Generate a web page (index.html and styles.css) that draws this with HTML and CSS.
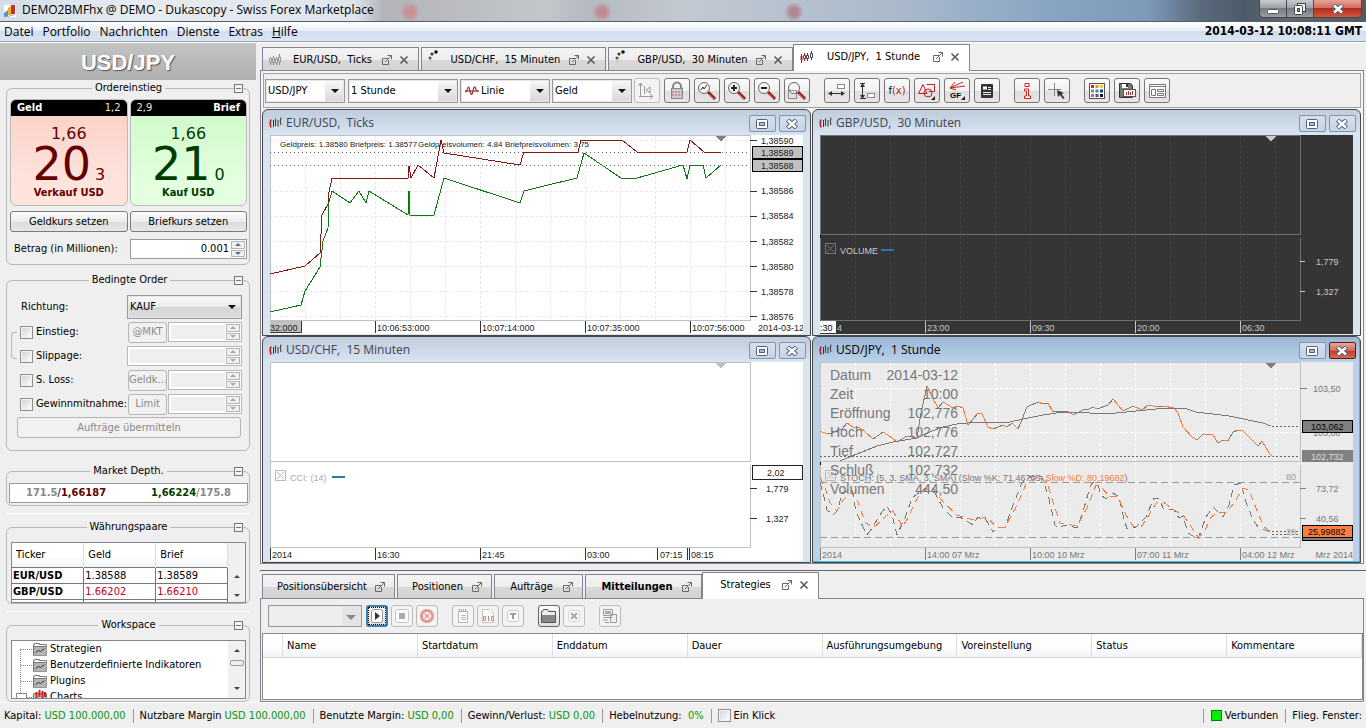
FILE: index.html
```html
<!DOCTYPE html>
<html lang="de">
<head>
<meta charset="utf-8">
<title>DEMO2BMFhx @ DEMO - Dukascopy - Swiss Forex Marketplace</title>
<link rel="stylesheet" href="styles.css">
</head>
<body>
<svg class="defs" aria-hidden="true">
  <symbol id="pop" viewBox="0 0 10 10"><path d="M6 3.500H.5v6h6V5M3 7l4-4M5.500.5h4v4M9.500.5L6.500 3.500" fill="none" stroke="#6a6a6a"/></symbol>
  <symbol id="close" viewBox="0 0 10 10"><path d="M1.500 1.500l7 7M8.500 1.500l-7 7" stroke="#555" stroke-width="1.500"/></symbol>
  <symbol id="candle" viewBox="0 0 14 14"><path d="M2 3.500Q.5 7 2 11.500" fill="none" stroke="#c01820" stroke-width="1.600"/><path d="M4.500 4v7" stroke="#701820"/><path d="M6.500 2.500v7.500M9 4v6.500M12 1.500q-1.500 4 0 7.500" fill="none" stroke="#444" stroke-width="1.100"/></symbol>
  <symbol id="candleg" viewBox="0 0 14 14"><path d="M1.500 4v8M4.500 3v9M7.500 4v8M10.500 1v11" stroke="#888"/><path d="M.5 5.500h2v4h-2zM3.500 5.500h2v4h-2zM6.500 6h2v4h-2zM9.500 4h2v5h-2z" fill="#ddd" stroke="#999"/></symbol>
  <symbol id="candler" viewBox="0 0 14 14"><path d="M1.500 4v9M4.500 3v8" stroke="#b02028"/><path d="M7.500 3v8M11.500 1v9" stroke="#444"/><path d="M.5 6h2v4h-2z" fill="#b02028"/><path d="M3.500 5.500h2v3h-2z" fill="#fff" stroke="#b02028"/><path d="M6.500 5.500h2v3h-2zM10.500 3.500h2v4h-2z" fill="#fff" stroke="#444"/></symbol>
  <symbol id="dots" viewBox="0 0 14 14"><circle cx="2" cy="8" r="1.500" fill="#555"/><circle cx="4" cy="4" r="1.500" fill="#333"/><circle cx="8" cy="2" r="1.800" fill="#111"/><circle cx="3" cy="11" r="1.500" fill="#ccc"/></symbol>
  <symbol id="redx" viewBox="0 0 14 10"><path d="M0 5h14" stroke="#333"/><path d="M0 6l2-1Q3.500-3 5 5q1.500 7 3 0Q9.500-3 11 4l2 1.500" fill="none" stroke="#b82a2a" stroke-width="1.200"/></symbol>
  <symbol id="max" viewBox="0 0 12 10"><rect x=".5" y=".5" width="11" height="9" rx="1" fill="#fff" stroke="#53617d"/><rect x="3.500" y="3.500" width="5" height="3" fill="#aabbd2" stroke="#53617d"/></symbol>
  <symbol id="wx" viewBox="0 0 12 10"><path d="M1.500 1l9 8M10.500 1l-9 8" stroke="#53617d" stroke-width="4.500"/><path d="M2 1.500l8 7M10 1.500l-8 7" stroke="#fff" stroke-width="2.400"/></symbol>
  <symbol id="lens" viewBox="0 0 20 20"><path d="M11 11l7 7" stroke="#9b1c1c" stroke-width="3"/><path d="M12 13l5 5" stroke="#e66" stroke-width="1"/><circle cx="7" cy="7" r="5.500" fill="#f4f4f4" stroke="#666"/></symbol>
  <symbol id="folder" viewBox="0 0 14 14"><path d="M.5 13.500V2.500h1v-1h5v1h7v11z" fill="#fff" stroke="#777"/><path d="M1 4.500h12.500v9H1z" fill="#b5b5b5"/><path d="M1 4.500h12" stroke="#777"/><path d="M2.500 10.500l3-2 2 1 4-3" fill="none" stroke="#333"/></symbol>
</svg>

<header class="titlebar">
  <svg class="logo" width="12" height="12" viewBox="0 0 12 12"><rect width="12" height="12" fill="#fff"/><path d="M0 8l4-3v7H0z" fill="#5a8fd0"/><path d="M4 3l3-2v9H4z" fill="#e5b62c"/><path d="M7 0h4v9H7z" fill="#cf2d2a"/><path d="M1 12l8-3 2 1-7 2z" fill="#b9b9b9"/></svg>
  <h1>DEMO2BMFhx @ DEMO - Dukascopy - Swiss Forex Marketplace</h1>
  <div class="winbtns">
    <button aria-label="Minimieren"><svg width="12" height="12"><rect x=".5" y="6.500" width="11" height="4" rx="1" fill="#fff" stroke="#555"/></svg></button>
    <button aria-label="Wiederherstellen"><svg width="12" height="12"><rect x="3.500" y=".5" width="8" height="8" fill="#eee" stroke="#444"/><rect x=".5" y="2.500" width="8" height="9" rx="1" fill="#fff" stroke="#444"/><rect x="3.500" y="5.500" width="2" height="3" fill="#999" stroke="#444"/></svg></button>
    <button class="x" aria-label="Schließen"><svg width="12" height="10"><use href="#wx"/></svg></button>
  </div>
</header>
<nav class="menubar">
  <button>Datei</button><button>Portfolio</button><button>Nachrichten</button><button>Dienste</button><button>Extras</button><button><u>H</u>ilfe</button>
  <time>2014-03-12 10:08:11 GMT</time>
</nav>

<div class="main">
<aside class="side">
  <h2 class="pair">USD/JPY</h2>

  <fieldset class="entry">
    <legend>Ordereinstieg</legend><button class="fold" aria-label="Einklappen"></button>
    <div class="cards">
      <button class="card sell"><span class="top"><b>Geld</b><i>1,2</i></span><span class="fig">1,66</span><span class="pips"><span>20</span><small>3</small></span><b class="act">Verkauf USD</b></button>
      <button class="card buy"><span class="top"><i>2,9</i><b>Brief</b></span><span class="fig">1,66</span><span class="pips"><span>21</span><small>0</small></span><b class="act">Kauf USD</b></button>
      <button class="btn">Geldkurs setzen</button>
      <button class="btn">Briefkurs setzen</button>
      <label for="amount">Betrag (in Millionen):</label>
      <span class="spin on"><input id="amount" value="0.001"><span class="arr"><button class="up" aria-label="Mehr"></button><button class="dn" aria-label="Weniger"></button></span></span>
    </div>
  </fieldset>

  <fieldset class="cond">
    <legend>Bedingte Order</legend><button class="fold" aria-label="Einklappen"></button>
    <div class="crow dir"><label for="dir">Richtung:</label><span class="combo full"><select id="dir"><option>KAUF</option></select></span></div>
    <div class="crow link"><label><input type="checkbox">Einstieg:</label><button class="btn off">@MKT</button><span class="spin"><input disabled aria-label="Einstieg"><span class="arr"><button class="up" disabled aria-label="Mehr"></button><button class="dn" disabled aria-label="Weniger"></button></span></span></div>
    <div class="crow wide"><label><input type="checkbox">Slippage:</label><span class="spin"><input disabled aria-label="Slippage"><span class="arr"><button class="up" disabled aria-label="Mehr"></button><button class="dn" disabled aria-label="Weniger"></button></span></span></div>
    <div class="crow"><label><input type="checkbox">S. Loss:</label><button class="btn off">Geldk…</button><span class="spin"><input disabled aria-label="S. Loss"><span class="arr"><button class="up" disabled aria-label="Mehr"></button><button class="dn" disabled aria-label="Weniger"></button></span></span></div>
    <div class="crow"><label><input type="checkbox">Gewinnmitnahme:</label><button class="btn off">Limit</button><span class="spin"><input disabled aria-label="Gewinnmitnahme"><span class="arr"><button class="up" disabled aria-label="Mehr"></button><button class="dn" disabled aria-label="Weniger"></button></span></span></div>
    <button class="btn off submit">Aufträge übermitteln</button>
  </fieldset>
  <fieldset class="md">
    <legend>Market Depth.</legend><button class="fold" aria-label="Einklappen"></button>
    <div class="depth"><span>171.5<em>/</em><strong class="r">1,66187</strong></span><span><strong class="g">1,66224</strong>/175.8</span></div>
  </fieldset>
  <hr>
  <fieldset class="box">
    <legend>Währungspaare</legend><button class="fold" aria-label="Einklappen"></button>
    <div class="pane pairs">
      <table><thead><tr><th>Ticker</th><th>Geld</th><th>Brief</th></tr></thead>
      <tbody><tr><td>EUR/USD</td><td>1.38588</td><td>1.38589</td></tr><tr class="red"><td>GBP/USD</td><td>1.66202</td><td>1.66210</td></tr><tr><td></td><td></td><td></td></tr></tbody></table>
      <div class="sb"><i class="su"></i><i class="sd"></i></div>
    </div>
  </fieldset>
  <hr>
  <fieldset class="box">
    <legend>Workspace</legend><button class="fold" aria-label="Einklappen"></button>
    <div class="pane tree">
      <ul>
        <li><svg width="14" height="14"><use href="#folder"/></svg>Strategien</li>
        <li><svg width="14" height="14"><use href="#folder"/></svg>Benutzerdefinierte Indikatoren</li>
        <li><svg width="14" height="14"><use href="#folder"/></svg>Plugins</li>
        <li class="charts"><svg width="14" height="14" viewBox="0 0 14 14"><path d="M.5 3.500h13v10H.5z" fill="#ccc" stroke="#777"/><path d="M3.500 2v7M6.500 0v7M9.500 1v7M12 2v5" stroke="#c22" stroke-width="2"/></svg>Charts</li>
      </ul>
      <div class="sb"><i class="su"></i><i class="thumb"></i><i class="sd"></i></div>
    </div>
  </fieldset>
</aside>

<main class="work">
  <div class="tabs">
    <div class="tab t157"><svg width="14" height="14"><use href="#candleg"/></svg><button class="name">EUR/USD,&nbsp; Ticks</button><button aria-label="Abdocken"><svg width="10" height="10"><use href="#pop"/></svg></button><button aria-label="Schließen"><svg width="10" height="10"><use href="#close"/></svg></button></div>
    <div class="tab t187"><svg class="up2" width="14" height="14"><use href="#dots"/></svg><button class="name">USD/CHF,&nbsp; 15 Minuten</button><button aria-label="Abdocken"><svg width="10" height="10"><use href="#pop"/></svg></button><button aria-label="Schließen"><svg width="10" height="10"><use href="#close"/></svg></button></div>
    <div class="tab t187"><svg class="up2" width="14" height="14"><use href="#dots"/></svg><button class="name">GBP/USD,&nbsp; 30 Minuten</button><button aria-label="Abdocken"><svg width="10" height="10"><use href="#pop"/></svg></button><button aria-label="Schließen"><svg width="10" height="10"><use href="#close"/></svg></button></div>
    <div class="tab t177 act"><svg width="14" height="14"><use href="#candler"/></svg><button class="name">USD/JPY,&nbsp; 1 Stunde</button><button aria-label="Abdocken"><svg width="10" height="10"><use href="#pop"/></svg></button><button aria-label="Schließen"><svg width="10" height="10"><use href="#close"/></svg></button></div>
  </div>

  <div class="frame">
    <div class="toolbar">
      <span class="combo w80"><select aria-label="Instrument"><option>USD/JPY</option></select></span>
      <span class="combo w110"><select aria-label="Periode"><option>1 Stunde</option></select></span>
      <span class="combo w90"><svg width="14" height="10"><use href="#redx"/></svg><select aria-label="Darstellung"><option>Linie</option></select></span>
      <span class="combo w80 last"><select aria-label="Seite"><option>Geld</option></select></span>
      <button class="tb off" aria-label="Verschieben"><svg width="20" height="20"><path d="M3.500 3v12M1.500 5l2-3 2 3M2 15.500h14M13 13l3 2.500-3 2.500M7.500 5v8M13 6v6l-4-3z" fill="none" stroke="#999"/></svg></button>
      <button class="tb" aria-label="Sperren"><svg width="20" height="20"><path d="M6 8V5.500a4 4 0 0 1 8 0V8" fill="none" stroke="#888" stroke-width="2"/><rect x="4.500" y="7.500" width="11" height="10" fill="#ccc" stroke="#888"/><path d="M5 11h10M5 14h10" stroke="#c66" stroke-dasharray="2 1"/></svg></button>
      <button class="tb" aria-label="Zoom anpassen"><svg width="20" height="20"><use href="#lens"/><path d="M4 9l2-3 1 2 3-4" fill="none" stroke="#333"/></svg></button>
      <button class="tb" aria-label="Vergrößern"><svg width="20" height="20"><use href="#lens"/><path d="M4 7h6M7 4v6" stroke="#222" stroke-width="2"/></svg></button>
      <button class="tb" aria-label="Verkleinern"><svg width="20" height="20"><use href="#lens"/><path d="M4 7h6" stroke="#222" stroke-width="2"/></svg></button>
      <button class="tb gap" aria-label="Bereich zoomen"><svg width="20" height="20"><use href="#lens"/><path d="M1.500 9.500h8v8h-8z" fill="none" stroke="#333" stroke-dasharray="1 1"/></svg></button>
      <button class="tb" aria-label="Horizontal"><svg width="20" height="20"><rect x="10.500" y="3.500" width="7" height="4" fill="#fff" stroke="#888"/><path d="M2 12.500h14" stroke="#333"/><path d="M5 10l-4 2.500 4 2.500zM14 10l4 2.500-4 2.500z" fill="#333"/></svg></button>
      <button class="tb" aria-label="Vertikal"><svg width="20" height="20"><rect x="10.500" y="12.500" width="7" height="4" fill="#fff" stroke="#888"/><path d="M5.500 3v14M3 17.500h6M3 2.500h5" stroke="#333"/><path d="M3 6l2.500-4L8 6zM3 14l2.500 4L8 14z" fill="#333"/></svg></button>
      <button class="tb fx"><span>f<em>(x)</em></span></button>
      <button class="tb" aria-label="Formen"><svg width="20" height="20"><path d="M1.500 12.500l4.500-9 4 9zM9.500 3.500h8v7h-6" fill="none" stroke="#b22"/><circle cx="11" cy="12" r="4" fill="none" stroke="#b22"/><path d="M18 15v4h-4z" fill="#222"/></svg></button>
      <button class="tb gf" aria-label="GF"><svg width="20" height="20"><path d="M3 7l15-2M3 7l13-6M3 7L8 1M3 7l6 2" stroke="#c22" fill="none"/><path d="M18 15v4h-4z" fill="#222"/></svg><span>GF</span></button>
      <button class="tb gap" aria-label="Notiz"><svg width="20" height="20"><rect x="4" y="3" width="12" height="14" rx="1" fill="#333"/><path d="M6 5.500h4v3H6z" fill="#fff"/><path d="M11 6.500h3M11 8.500h3M6 11.500h8M6 13.500h8" stroke="#eee"/></svg></button>
      <button class="tb" aria-label="Info"><svg width="20" height="20"><path d="M8 2.500h4v3H8zM7.500 8h4v7h2v2.500h-6V15h2v-5h-2z" fill="#fff" stroke="#c22"/></svg></button>
      <button class="tb gap" aria-label="Fadenkreuz"><svg width="20" height="20"><path d="M7.500 2v13M1 8.500h13" stroke="#888"/><path d="M10 9l7 3-2.500 1 3 4-1.500 1-3-4-2 2z" fill="#333"/></svg></button>
      <button class="tb" aria-label="Farben"><svg width="20" height="20"><rect x="2.500" y="2.500" width="15" height="15" fill="#fff" stroke="#555"/><path d="M4 4h3v3H4z" fill="#d22"/><path d="M8.500 4h3v3h-3z" fill="#e82"/><path d="M13 4h3v3h-3z" fill="#fc3"/><path d="M4 8.500h3v3H4z" fill="#6a2"/><path d="M8.500 8.500h3v3h-3z" fill="#28c"/><path d="M13 8.500h3v3h-3z" fill="#148"/><path d="M4 13h3v3H4z" fill="#b5d"/><path d="M8.500 13h3v3h-3z" fill="#555"/><path d="M13 13h3v3h-3z" fill="#111"/></svg></button>
      <button class="tb" aria-label="Speichern"><svg width="20" height="20"><path d="M2.500 2.500h11l2 2v12h-13z" fill="#777" stroke="#333"/><path d="M5 3h6v4H5z" fill="#fff"/><path d="M9 3h2v3H9z" fill="#333"/><rect x="6.500" y="8.500" width="12" height="7" fill="#fff" stroke="#555"/><path d="M9.500 11v3M11.500 10v4M13.500 11v3M15.500 10v4" stroke="#b33"/></svg></button>
      <button class="tb" aria-label="Vorlage"><svg width="20" height="20"><path d="M2.500 3.500h16v13h-16zM3 5.500h15M4.500 8.500h4v6h-4zM10.500 8.500h6v2h-6zM10.500 12.500h6v2h-6z" fill="#fff" stroke="#777"/></svg></button>
    </div>

    <div class="mdi">
      <section class="win">
        <div class="wt"><svg width="14" height="14"><use href="#candle"/></svg><h3>EUR/USD,&nbsp; Ticks</h3><button aria-label="Maximieren"><svg width="12" height="10"><use href="#max"/></svg></button><button aria-label="Schließen"><svg width="12" height="10"><use href="#wx"/></svg></button></div>
        <svg class="chart light">
          <path class="grid" d="M35.500 1V185M70.500 1V185M105.500 1V185M140.500 1V185M175.500 1V185M210.500 1V185M245.500 1V185M280.500 1V185M315.500 1V185M350.500 1V185M385.500 1V185M420.500 1V185M455.500 1V185M0 5.500H480M0 56.500H480M0 81.500H480M0 106.500H480M0 131.500H480M0 156.500H480M0 181.500H480"/>
          <path class="frm" d="M.5 185.500V.5H480.500V185.500H0"/>
          <path class="dot" d="M0 17.500H480M0 30.500H480"/>
          <g class="info"><text x="10" y="12">Geldpreis: 1.38580</text><text x="80" y="12">Briefpreis: 1.38577</text><text x="148" y="12">Geldpreisvolumen: 4.84</text><text x="235" y="12">Briefpreisvolumen: 3.75</text></g>
          <polyline class="ln" stroke="#8b1414" points="0,139 35,131 50,118 52,80 58,69 59,57 62,43 138,43 139,31 141,43 148,30 164,43 171,5 174,18 250,30 254,17 308,17 311,5 352,5 367,17 417,17 420,5 434,17 451,17"/>
          <polyline class="ln" stroke="#0f7a14" points="0,177 31,170 35,156 50,132 53,106 58,93 59,67 62,56 80,68 89,56 96,68 99,56 138,80 139,56 140,80 164,80 174,43 250,68 254,56 270,52 307,43 314,18 351,43 367,43 413,30 417,44 420,30 433,30 436,43 451,30"/>
          <path d="M445 1h12l-6 5z" fill="#808080"/>
          <path class="tick" d="M480 5.500h7M480 56.500h7M480 81.500h7M480 106.500h7M480 131.500h7M480 156.500h7M480 181.500h7M105.500 186v12M210.500 186v12M315.500 186v12M420.500 186v12"/>
          <rect x="482.500" y="11.500" width="50" height="12" class="tag"/><rect x="482.500" y="24.500" width="50" height="12" class="tag"/>
          <rect x="0" y="186" width="31" height="12" fill="#c0c0c0"/><path d="M31.500 186v11.500H0" class="tick"/>
          <g><text x="491" y="9">1,38590</text><text x="491" y="21">1,38589</text><text x="491" y="34">1,38588</text><text x="491" y="59">1,38586</text><text x="491" y="84">1,38584</text><text x="491" y="110">1,38582</text><text x="491" y="135">1,38580</text><text x="491" y="160">1,38578</text><text x="491" y="185">1,38576</text>
          <text x="0" y="196">32:000</text><text x="107" y="196">10:06:53:000</text><text x="212" y="196">10:07:14:000</text><text x="317" y="196">10:07:35:000</text><text x="422" y="196">10:07:56:000</text><text x="488" y="196">2014-03-12</text></g>
        </svg>
      </section>

      <section class="win">
        <div class="wt"><svg width="14" height="14"><use href="#candle"/></svg><h3>GBP/USD,&nbsp; 30 Minuten</h3><button aria-label="Maximieren"><svg width="12" height="10"><use href="#max"/></svg></button><button aria-label="Schließen"><svg width="12" height="10"><use href="#wx"/></svg></button></div>
        <svg class="chart dark">
          <path class="grid" d="M35.500 1V185M70.500 1V185M105.500 1V185M140.500 1V185M175.500 1V185M210.500 1V185M245.500 1V185M280.500 1V185M315.500 1V185M350.500 1V185M385.500 1V185M420.500 1V185M455.500 1V185"/>
          <path class="frm" d="M.5 185.500V.5H480.500V99.500H0M480.500 103V185.500H0"/>
          <path d="M0 100v3" stroke="#000" stroke-width="2"/>
          <path d="M445 1h12l-6 5z" fill="#c8c8c8"/>
          <path d="M5.500 108.500h10v10h-10zM7 110l7 7M14 110l-7 7" fill="none" stroke="#777"/>
          <text x="20" y="119">VOLUME</text><path d="M61 115h13" stroke="#2a78b0" stroke-width="2"/>
          <path class="tick" d="M480 126.500h5M480 156.500h5M105.500 186v12M210.500 186v12M315.500 186v12M420.500 186v12"/>
          <text x="496" y="130">1,779</text><text x="496" y="160">1,327</text>
          <rect x="0" y="186" width="16" height="12" fill="#fff"/><text x="0" y="196" class="blk">:30</text><text x="17" y="196">4</text>
          <text x="107" y="196">23:00</text><text x="212" y="196">09:30</text><text x="317" y="196">20:00</text><text x="422" y="196">06:30</text>
        </svg>
      </section>

      <section class="win">
        <div class="wt"><svg width="14" height="14"><use href="#candle"/></svg><h3>USD/CHF,&nbsp; 15 Minuten</h3><button aria-label="Maximieren"><svg width="12" height="10"><use href="#max"/></svg></button><button aria-label="Schließen"><svg width="12" height="10"><use href="#wx"/></svg></button></div>
        <svg class="chart light">
          <path class="frm" d="M.5 185.500V.5H480.500V99.500H0M480.500 103V185.500H0"/>
          <path d="M445 1h12l-6 5z" fill="#c0c0c0"/>
          <path d="M5.500 108.500h10v10h-10zM7 110l7 7M14 110l-7 7" fill="none" stroke="#bbb"/>
          <text x="20" y="119" class="pale">CCI: (14)</text><path d="M62 115h13" stroke="#2a78b0" stroke-width="2"/>
          <path class="tick" d="M480 126.500h7M480 156.500h7M105.500 186v12M210.500 186v12M315.500 186v12M387.500 186v12M417.500 186v12M419.500 186v12M.5 186v12"/>
          <rect x="482.500" y="103.500" width="50" height="14" fill="#fff" stroke="#222"/>
          <text x="497" y="114">2,02</text><text x="496" y="130">1,779</text><text x="496" y="160">1,327</text>
          <text x="2" y="196">2014</text><text x="107" y="196">16:30</text><text x="212" y="196">21:45</text><text x="317" y="196">03:00</text><text x="390" y="196">07:15</text><text x="421" y="196">08:15</text>
        </svg>
      </section>

      <section class="win active">
        <div class="wt"><svg width="14" height="14"><use href="#candle"/></svg><h3>USD/JPY,&nbsp; 1 Stunde</h3><button aria-label="Maximieren"><svg width="12" height="10"><use href="#max"/></svg></button><button class="x" aria-label="Schließen"><svg width="12" height="10"><use href="#wx"/></svg></button></div>
        <svg class="chart gray">
          <path class="grid" d="M35.500 1V185M70.500 1V185M105.500 1V185M140.500 1V185M175.500 1V185M210.500 1V185M245.500 1V185M280.500 1V185M315.500 1V185M350.500 1V185M385.500 1V185M420.500 1V185M455.500 1V185M0 26.500H480M0 70.500H480"/>
          <path class="frm" d="M.5 185.500V.5H480.500V99.500H0M480.500 103V185.500H0"/>
          <path d="M0 100v3" stroke="#000" stroke-width="2"/>
          <path d="M0 94.500H480M452 64.500H480M452 169.500H480M452 172.500H480" stroke="#666" stroke-dasharray="2 2"/>
          <path d="M0 120.500H480M0 175.500H480" stroke="#999" stroke-dasharray="7 4"/>
          <path d="M5.500 108.500h10v10h-10zM7 110l7 7M14 110l-7 7" fill="none" stroke="#bbb"/>
          <polyline class="ln" stroke="#ff7a3a" points="0,69 7,72 12,71 18,68 22,67 27,61 33,65 40,66 45,70 53,77 63,70 68,73 77,80 87,74 97,76 101,51 107,24 112,35 118,46 123,40 133,46 138,44 143,46 148,63 158,51 162,52 168,65 173,67 183,63 187,65 192,61 198,67 207,45 218,40 223,42 228,41 233,50 248,49 253,53 263,48 269,47 273,45 277,47 288,43 293,37 303,49 313,44 322,48 328,43 338,45 343,44 354,46 358,51 363,65 372,75 377,78 383,72 393,73 398,81 403,78 408,79 413,70 418,68 423,69 438,84 442,79 449,91 453,95"/>
          <path class="ln" stroke="#7d7d7d" d="M7 72L12 71 18 68 22 67 27 61M53 77L63 70M77 80L87 74M97 76L101 51 107 24M118 46L123 40M133 46L138 44M148 63L158 51M173 67L183 63M187 65L192 61M198 67L207 45 218 40M223 42L228 41M233 50L248 49M253 53L263 48 269 47 273 45M277 47L288 43 293 37M303 49L313 44M322 48L328 43M338 45L343 44M377 78L383 72M398 81L403 78M408 79L413 70 418 68M438 84L442 79"/>
          <polyline class="ln" stroke="#777" points="20,99 37,92 57,84 73,80 97,76 112,69 123,65 137,62 157,60 190,60 203,57 223,53 243,50 270,51 296,51 316,49 346,46 364,46 376,50 409,54 443,61 451,64"/>
          <polyline class="ln dash" stroke="#777" points="0,121 3,131 7,148 13,153 18,148 22,131 32,127 36,150 47,173 52,166 62,150 67,144 72,153 77,173 85,156 92,136 105,126 115,131 123,146 133,156 140,155 153,163 158,155 165,156 173,170 177,166 185,165 193,143 202,121 212,114 222,115 228,133 235,163 238,166 245,163 257,166 262,153 270,125 273,120 278,123 281,133 286,137 293,131 299,135 303,153 307,167 316,165 326,155 334,136 339,136 343,146 354,148 359,156 363,154 368,171 378,177 386,155 393,145 403,155 409,143 414,123 421,121 426,140 433,158 439,166 451,170"/>
          <polyline class="ln dash" stroke="#ff7a3a" points="0,115 5,126 10,141 17,149 23,138 32,130 38,140 45,160 53,166 62,158 72,148 80,160 82,165 88,156 95,140 102,129 113,126 123,140 137,153 153,158 167,155 177,166 185,165 197,143 207,120 218,115 227,120 233,140 240,161 257,164 267,146 276,123 281,125 289,134 298,135 306,153 313,164 321,165 329,153 336,141 343,140 354,148 363,153 378,175 384,170 391,155 398,150 406,151 414,141 423,126 429,128 436,146 444,165 451,170"/>
          <path d="M445 1h12l-6 5z" fill="#808080"/>
          <text x="20" y="119">STOCH: (5, 3, SMA, 3, SMA) (Slow %K: 71,46705, <tspan class="or">Slow %D: 80,19682</tspan>)</text>
          <text x="466" y="118" class="mid">80</text><text x="466" y="173" class="mid">20</text>
          <g class="big"><text x="10" y="18">Datum</text><text x="10" y="37">Zeit</text><text x="10" y="56">Eröffnung</text><text x="10" y="75">Hoch</text><text x="10" y="94">Tief</text><text x="10" y="113">Schluß</text><text x="10" y="132">Volumen</text></g>
          <g class="big end"><text x="138" y="18">2014-03-12</text><text x="138" y="37">10:00</text><text x="138" y="56">102,776</text><text x="138" y="75">102,776</text><text x="138" y="94">102,727</text><text x="138" y="113">102,732</text><text x="138" y="132">444,50</text></g>
          <path class="tick" d="M480 26.500h7M480 126.500h6M480 156.500h6M105.500 186v12M210.500 186v12M315.500 186v12M420.500 186v12M.5 186v12"/>
          <text x="493" y="30">103,50</text><text x="493" y="74">103,00</text><text x="496" y="130">73,72</text><text x="496" y="160">40,56</text>
          <rect x="482.500" y="58.500" width="50" height="12" fill="#808080" stroke="#000"/><text x="491" y="68" class="blk">103,062</text>
          <rect x="482" y="88" width="51" height="12" fill="#808080"/><text x="491" y="98" class="lit">102,732</text>
          <rect x="482.500" y="166.500" width="50" height="12" fill="#808080" stroke="#000"/><rect x="482.500" y="163.500" width="50" height="12" fill="#ff7f3f" stroke="#000"/><text x="488" y="173" class="blk">25,99882</text>
          <text x="2" y="196">2014</text><text x="107" y="196">14:00 07 Mrz</text><text x="212" y="196">10:00 10 Mrz</text><text x="317" y="196">07:00 11 Mrz</text><text x="422" y="196">04:00 12 Mrz</text><text x="533" y="196" class="ra">Mrz 2014</text>
        </svg>
      </section>
    </div>
  </div>

  <div class="bottom">
    <div class="tabs">
      <div class="tab b133"><button class="name">Positionsübersicht</button><button aria-label="Abdocken"><svg width="10" height="10"><use href="#pop"/></svg></button></div>
      <div class="tab b95"><button class="name">Positionen</button><button aria-label="Abdocken"><svg width="10" height="10"><use href="#pop"/></svg></button></div>
      <div class="tab b89"><button class="name">Aufträge</button><button aria-label="Abdocken"><svg width="10" height="10"><use href="#pop"/></svg></button></div>
      <div class="tab b117"><button class="name"><b>Mitteilungen</b></button><button aria-label="Abdocken"><svg width="10" height="10"><use href="#pop"/></svg></button></div>
      <div class="tab b117 act"><button class="name">Strategies</button><button aria-label="Abdocken"><svg width="10" height="10"><use href="#pop"/></svg></button><button aria-label="Schließen"><svg width="10" height="10"><use href="#close"/></svg></button></div>
    </div>
    <div class="bframe">
      <div class="btools">
        <span class="combo dis"><select disabled aria-label="Strategie"><option></option></select></span>
        <button class="sm focus" aria-label="Start"><svg width="14" height="14"><rect x="1.500" y=".5" width="11" height="13" rx="2" fill="#fff" stroke="#999"/><path d="M5 3l5 4-5 4z" fill="#333"/></svg></button>
        <button class="sm off" aria-label="Stopp"><svg width="14" height="14"><rect x=".5" y=".5" width="13" height="13" rx="2" fill="#fff" stroke="#bbb"/><rect x="4" y="4" width="6" height="6" fill="#999"/></svg></button>
        <button class="sm off sp" aria-label="Alle stoppen"><svg width="14" height="14"><circle cx="7" cy="7" r="5.500" fill="#fff" stroke="#e08078" stroke-width="3"/><path d="M4.500 4.500l5 5M9.500 4.500l-5 5" stroke="#e08078" stroke-width="1.500"/></svg></button>
        <button class="sm off" aria-label="Bearbeiten"><svg width="14" height="14"><rect x="2.500" y="2.500" width="9" height="11" fill="#fff" stroke="#aaa"/><path d="M3 1.500h8" stroke="#999" stroke-width="3" stroke-dasharray="1 1"/><path d="M5 6.500h5M5 8.500h5M5 10.500h5" stroke="#aaa"/></svg></button>
        <button class="sm off" aria-label="Kompilieren"><svg width="14" height="14"><path d="M1.500.5h7l4 4v9h-11z" fill="#fff" stroke="#bbb"/><path d="M2.500 7.500h2v4h-2zM7.500 7v5M10.500 7.500h2v4h-2z" fill="none" stroke="#e0605a"/></svg></button>
        <button class="sm off sp" aria-label="Test"><svg width="14" height="14"><rect x="1.500" y="1.500" width="11" height="11" rx="2" fill="#fff" stroke="#bbb"/><path d="M4 5h6M7 5v5" stroke="#888" stroke-width="2"/></svg></button>
        <button class="sm" aria-label="Öffnen"><svg width="16" height="14"><path d="M.5 13.500v-11h1l1-2h4l1 2h7v11z" fill="#eee" stroke="#555"/><path d="M1 6h13v7H1z" fill="#888"/></svg></button>
        <button class="sm off sp" aria-label="Entfernen"><svg width="14" height="14"><rect x="1.500" y="1.500" width="11" height="11" rx="2" fill="#fff" stroke="#ccc"/><path d="M4 4l6 6M10 4l-6 6" stroke="#999" stroke-width="2"/></svg></button>
        <button class="sm off" aria-label="Remote"><svg width="16" height="16"><path d="M1.500 1.500h9v6h-9zM1.500 9.500h9M8.500 6.500h6v8h-6zM1 12h5M3 14.500h4" fill="#eee" stroke="#888"/><path d="M3 3h6v3H3z" fill="#999"/></svg></button>
      </div>
      <div class="strat">
        <table><thead><tr><th class="n0"></th><th>Name</th><th>Startdatum</th><th>Enddatum</th><th>Dauer</th><th>Ausführungsumgebung</th><th>Voreinstellung</th><th>Status</th><th>Kommentare</th></tr></thead></table>
      </div>
    </div>
  </div>
</main>
</div>

<footer class="status">
  <span>Kapital: <em>USD 100.000,00</em></span>
  <span>Nutzbare Margin <em>USD 100.000,00</em></span>
  <span>Benutzte Margin: <em>USD 0,00</em></span>
  <span>Gewinn/Verlust: <em>USD 0,00</em></span>
  <span>Hebelnutzung: &nbsp;<em>0%</em></span>
  <label><input type="checkbox">Ein Klick</label>
  <span class="conn"><i></i>Verbunden</span>
  <span>Flieg. Fenster:</span>
</footer>
</body>
</html>
```
FILE: styles.css
```css
*{box-sizing:border-box}
html,body{height:100%}
body{margin:0;display:flex;flex-direction:column;background:#efefef;color:#000;font:11px/14px "DejaVu Sans Condensed","DejaVu Sans",sans-serif;overflow:hidden}
button,input,select{font:inherit;color:inherit}
button{padding:0;border:0;background:none}
h1,h2,h3,ul,fieldset{margin:0;padding:0;font-weight:normal}
svg{display:block;flex:none}
em,i{font-style:normal}
.defs{position:absolute;width:0;height:0}

.titlebar{flex:none;height:22px;display:flex;align-items:flex-start;gap:6px;padding-left:4px;border-bottom:1px solid #55606c;background:radial-gradient(circle at 410px 12px,#c98f92 0 4px,transparent 10px),radial-gradient(circle at 602px 12px,#c08a92 0 4px,transparent 10px),radial-gradient(circle at 794px 12px,#b08a92 0 4px,transparent 10px),linear-gradient(90deg,#d3dde7 0,#e6ebf0 10%,#dfe5eb 26%,#b2b4b9 28%,#c3c6cb 40%,#b5b9c0 43%,#c3c9d1 50%,#a9b9cb 66%,#8ba6c4 76%,#7e99b7 84%,#5a6a7c 88%,#4d5a69 91%,#62686e 94%,#57585a)}
.logo{margin-top:5px}
h1{flex:1;font:12px/20px "Open Sans",sans-serif}
.winbtns{display:flex;margin-right:4px;border:1px solid #43484e;border-top:0;border-radius:0 0 5px 5px;overflow:hidden}
.winbtns button{width:27px;height:17px;display:grid;place-items:center;border-right:1px solid #43484e;background:linear-gradient(#c9cdd1,#9b9fa5 50%,#777c83 50%,#989ca3)}
.winbtns .x{width:47px;border:0;background:linear-gradient(#e8a196,#d0685a 50%,#b32e1e 50%,#d0563d)}
.menubar{flex:none;height:20px;display:flex;gap:9px;padding:0 4px;border-bottom:1px solid #98a1b0;background:linear-gradient(#fff,#e9eef7 45%,#d4ddee 50%,#dbe4f2)}
.menubar button,.menubar time{font:12px/18px "Open Sans",sans-serif}
.menubar time{margin-left:auto;font:bold 12px/18px "DejaVu Sans Condensed",sans-serif}

.main{flex:1;min-height:0;display:flex;border-top:1px solid #fff}
.side{flex:none;width:257px;padding-right:1px}
.pair{height:37px;margin-bottom:1px;background:linear-gradient(#c4c4c4,#afafaf);color:#fff;text-align:center;font:bold 22px/40px "Liberation Sans",sans-serif;text-shadow:1px 1px 1px #555}
fieldset{position:relative;min-width:0;margin:0 6px 9px;border:1px solid #b8b8b8;border-radius:6px;padding:4px 2px 2px 3px}
legend{margin:0 auto;padding:0 3px;line-height:14px}
.fold{position:absolute;right:6px;top:-11px;width:9px;height:9px;border:1px solid #777;background:linear-gradient(#777,#777) center/5px 1px no-repeat #f4f4f4}
hr{height:1px;margin:-2px 6px 6px;border:0;background:#fff}
.entry{margin-bottom:8px;padding-bottom:3px}
.cards{display:grid;grid-template-columns:1fr 1fr;gap:0 2px;align-items:center}
.card{height:107px;display:flex;flex-direction:column;align-items:center;border:1px solid #bbb;border-radius:6px;overflow:hidden;background:linear-gradient(#f9cfc6,#ffe4dc 80%);color:#640000}
.buy{background:linear-gradient(#cdf8c6,#e3ffe0 80%);color:#003c00}
.top{align-self:stretch;height:16px;display:flex;justify-content:space-between;padding:0 6px;background:#000;color:#fff;line-height:16px}
.top i{color:#eee8c8}
.fig{margin-top:9px;font:16px/18px "DejaVu Sans",sans-serif}
.pips{height:40px;display:flex;align-items:baseline;gap:4px;font:46px/42px "DejaVu Sans",sans-serif}
.pips small{font-size:16px}
.act{margin-top:3px}
.btn{height:21px;border:1px solid #7c7c7c;border-radius:3px;background:linear-gradient(#fdfdfd,#ececec 50%,#dcdcdc 51%,#e6e6e6)}
.cards .btn{margin:5px 0}
.btn.off{border-color:#b4b4b4;background:#f1f1f1;color:#8a8a8a}
.cards label{padding-left:4px;white-space:nowrap}
.spin{display:flex;height:20px;padding:1px;border:1px solid #9a9a9a;background:#fff}
.spin input{flex:1;width:0;min-width:0;padding:0 2px;border:0;background:#efefef;text-align:right}
.spin.on{margin:2px 0}
.spin.on input{background:#fff}
.spin:not(.on){border-color:#b9b9b9}
.spin:not(.on) input{margin:1px}
.arr{display:grid;grid-template-rows:1fr 1fr;width:14px;gap:1px}
.arr button{display:grid;place-items:center;border:1px solid #b5b5b5;background:#f1f1f1}
.arr button::after,.sb i::after,.combo::after{content:"";border:3px solid transparent}
.up::after{border-bottom-color:#58689c!important;border-top:0!important}
.dn::after{border-top-color:#58689c!important;border-bottom:0!important}
.arr button:disabled::after{opacity:.5;filter:grayscale(1)}
.cond{padding:7px 7px 12px 10px;margin-bottom:13px}
.crow{display:grid;grid-template-columns:110px 39px 1fr;gap:1px;height:24px;align-items:center}
.crow label{display:flex;align-items:center;gap:3px;padding-left:3px;white-space:nowrap}
.crow input[type=checkbox],.status input{appearance:none;width:13px;height:13px;margin:0;border:1px solid #8a8f94;background:linear-gradient(135deg,#cfd3d8,#fff);box-shadow:inset 0 0 0 1px #f4f4f4}
.dir,.wide{grid-template-columns:109px 1fr}
.dir{height:26px}
.dir label{padding-left:4px}
.dir .combo{height:24px}
.link{position:relative}
.link::before{content:"";position:absolute;left:-6px;top:12px;width:5px;height:25px;border:1px solid #b8b8b8;border-right:0;border-radius:4px 0 0 4px}
.submit{display:block;width:calc(100% - 1px);margin-top:1px}
.btn.off{white-space:nowrap;overflow:hidden}
.depth{display:flex;justify-content:space-between;height:20px;margin:1px -1px 0 -1px;padding:0 16px;border:1px solid #999;background:#fff;color:#888;line-height:18px;font-weight:bold}
.depth em,.depth .r{color:#5c0000}.depth em{color:#333}.depth .g{color:#003c00}
.box{padding:8px 3px 0 4px}
.pane{display:flex;height:61px;overflow:hidden;border:1px solid #828790;background:#fff}
.tree{height:59px;margin-bottom:2px}
.pairs table{flex:none;width:calc(100% - 17px);table-layout:fixed;border-collapse:collapse}
.pairs th{height:24px;padding:0 4px;text-align:left;font-weight:normal;border-right:1px solid #ddd;background:linear-gradient(#fff 50%,#f2f3f5)}
.pairs td{height:16px;padding:0 1px;border:1px solid #777;border-left:0;line-height:15px}
.pairs td:first-child{font-weight:bold}
.pairs .red td + td{color:#c4001a}
.sb{flex:none;width:17px;display:flex;flex-direction:column;align-items:center;background:#f0f0f0}
.sb .su::after,.sb .sd::after{display:block}
.su::after{border-bottom-color:#444!important;border-top:0!important}
.sd::after{border-top-color:#444!important;border-bottom:0!important}
.sb .su{margin-top:8px}
.pairs .su{margin-top:32px}
.sb .sd{margin-top:auto;margin-bottom:8px}
.pairs .sd{margin-bottom:5px}
.thumb{width:14px;height:6px;margin-top:8px;border:1px solid #999;border-radius:2px;background:#eee;overflow:hidden}
.tree ul{flex:1;list-style:none;position:relative}
.tree ul::before{content:"";position:absolute;left:8px;top:8px;height:60px;border-left:1px dotted #888}
.tree li{position:relative;display:flex;align-items:center;gap:3px;height:16px;padding-left:21px;white-space:nowrap}
.tree li::before{content:"";position:absolute;left:9px;width:11px;border-top:1px dotted #888}
.charts::after{content:"";position:absolute;left:4px;top:4px;width:9px;height:9px;border:1px solid #888;background:linear-gradient(#225,#225) center/5px 1px no-repeat #fff}

.work{flex:1;min-width:0;display:flex;flex-direction:column;padding-left:3px}
.tabs{display:flex;align-items:flex-end;gap:2px;padding-left:2px}
.tab{height:24px;display:flex;align-items:center;gap:7px;padding:0 9px 0 6px;border:1px solid #84858f;border-bottom:0;background:linear-gradient(#f3f3f3,#ededed 50%,#d9d9d9 51%,#d3d3d3)}
.tab .name{flex:1;white-space:nowrap}
.up2{align-self:flex-start;margin-top:2px}
.t157{width:157px}.t187{width:185px}.t177{width:177px}
.b133{width:133px}.b95{width:95px}.b89{width:89px}.b117{width:117px}
.tab.act{position:relative;height:27px;margin:0 0 0 -2px;padding-bottom:2px;background:#fff;z-index:1}
.work>.tabs{height:28px}
.frame{flex:1;min-height:0;display:flex;flex-direction:column;margin:-1px 2px 0 0;border:1px solid #84858f;background:#f5f5f5;padding:2px 2px 0}
.toolbar{flex:none;height:35px;display:flex;align-items:center;gap:4px;padding:0 1px;border:1px solid #a0a0a0;background:#efefef}
.combo{position:relative;display:flex;align-items:center;height:24px;border:1px solid #999;background:linear-gradient(90deg,#fff calc(100% - 19px),transparent 0),linear-gradient(#f8f8f8,#d8d8d8);box-shadow:inset 0 0 0 1px #e6e6e6}
.combo select{flex:1;min-width:0;height:100%;appearance:none;border:0;background:none;padding:0 2px}
.combo::after{position:absolute;right:5px;top:9px;border-width:4px;border-top-color:#111;border-bottom:0}
.combo.full{background:linear-gradient(#fbfbfb,#e9e9e9 50%,#d6d6d6 51%,#dcdcdc)}
.combo>svg{margin-left:4px}
.w80{width:80px;margin-right:-1px}.w110{width:110px;margin-right:-2px}.w90{width:90px;margin-right:-2px}
.w80.last{margin-right:-2px}
.tb{flex:none;width:26px;height:25px;display:grid;place-items:center;border:1px solid #777;border-radius:3px;background:linear-gradient(#fbfbfb,#f1f1f1 50%,#dedede 51%,#e6e6e6)}
.tb.off{border-color:#bbb;background:#f3f3f3}
.tb.gap{margin-right:10px}
.fx{font-size:11px}.fx em{color:#b22}
.gf{position:relative}
.gf span{position:absolute;left:5px;bottom:1px;font:bold 8px/10px "Liberation Sans",sans-serif}

.mdi{flex:1;min-height:0;display:grid;grid-template:1fr 1fr/1fr 1fr;gap:0 1px;padding-top:1px;margin:0 0 0 -1px}
.win{min-width:0;display:flex;flex-direction:column;padding:0 7px 1px;border:1px solid #484848;border-radius:6px 6px 0 0;background:linear-gradient(#bfccdb,#d9e4f1 25px)}
.win.active{background:linear-gradient(#9ab6d3,#b9d2ea 25px);box-shadow:inset -1px -1px #29c4e8}
.wt{flex:none;height:25px;display:flex;align-items:center;gap:3px;color:#3c4552}
.active .wt{color:#000}
.wt svg{margin-left:-1px}
.wt h3{flex:1;font:12px/24px "Open Sans",sans-serif}
.wt button{width:27px;height:17px;margin-top:2px;display:grid;place-items:center;border:1px solid #8493ab;border-radius:2px;background:linear-gradient(#d5e0ed,#c6d4e5)}
.wt .x{border-color:#5b1a1a;background:linear-gradient(#eaa99f,#d0685a 50%,#bb3a2a 50%,#d86a50)}
.wt button:last-child{margin-right:-3px}
.chart{flex:1;min-height:0;width:100%;font:9px "Liberation Sans",sans-serif}
.chart .ln{fill:none;shape-rendering:crispEdges}
.dash{stroke-dasharray:7 5}
.chart path{shape-rendering:crispEdges}
.frm{fill:none;stroke:#c0c0c0}
.grid{stroke:#e8e8e8;stroke-dasharray:3 2}
.dot{stroke:#666;stroke-dasharray:1 3}
.tick{fill:none;stroke:#333}
.tag{fill:#c0c0c0;stroke:#000}
.info{font-size:8px}
.light{background:#fff;fill:#222}
.dark{background:#353535;fill:#c8c8c8}
.dark .grid{stroke:#414141}.dark .frm{stroke:#707070}.dark .tick{stroke:#c8c8c8}
.gray{background:#ebebeb;fill:#777}
.gray .grid{stroke:#fff}.gray .tick{stroke:#808080}
.big{font-size:14px}
.end,.ra{text-anchor:end}
.blk{fill:#000}.lit{fill:#ddd}.or{fill:#ff7a3a}.mid{fill:#999}.pale{fill:#aaa}

.bottom{flex:none;margin-top:6px;padding-top:1px;border-top:1px solid #666}
.bottom .tab{padding:0 9px 0 13px}
.bottom .b95,.bottom .b89{padding-left:12px}
.bottom .act{margin:0 0 -1px -2px;padding-bottom:3px}
.bframe{margin-right:2px;padding:0 0 1px 1px;border:1px solid #84858f}
.btools{display:flex;align-items:center;gap:3px;height:34px;padding:0 6px}
.combo.dis{width:94px;height:22px;margin-right:1px;background:linear-gradient(90deg,#eee calc(100% - 19px),#e4e4e4 0)}
.dis::after{border-top-color:#888;border-width:5px;border-bottom:0}
.sm{width:22px;height:22px;display:grid;place-items:center;border:1px solid #666;border-radius:3px;background:linear-gradient(#fbfbfb,#e0e0e0)}
.sm.off{border-color:#bbb;background:#f3f3f3}
.sm.off svg{opacity:.8}
.sm.sp{margin-right:11px}
.sm.focus{border:2px solid #3c7fb1;outline:1px dotted #000;outline-offset:-3px}
.strat{height:67px;border:1px solid #84858f;background:#fff}
.strat table{width:100%;table-layout:fixed;border-spacing:0}
.strat th{height:24px;padding:0 4px;border-right:1px solid #dedede;border-bottom:1px solid #d5d5d5;background:linear-gradient(#fff 45%,#f2f3f5);text-align:left;font-weight:normal;white-space:nowrap}
.n0{width:20px}

.status{flex:none;height:26px;display:flex;align-items:center;padding-left:4px;white-space:nowrap;border-top:1px solid #fff}
.status>*{margin-right:14px;position:relative}
.status>*:not(label):not(:last-child)::after{content:"";position:absolute;right:-8px;top:0;height:14px;border-left:1px solid #999}
.status em{color:#0a960a}
.status label{display:flex;gap:3px;align-items:center}
.conn{display:flex;align-items:center;gap:3px;margin-left:auto}
.conn i{width:11px;height:11px;border:1px solid #0a7a0a;background:#00f000}
.conn::before{content:"";position:absolute;left:-8px;top:0;height:14px;border-left:1px solid #999}
.status>*:last-child{margin-right:4px}
```
